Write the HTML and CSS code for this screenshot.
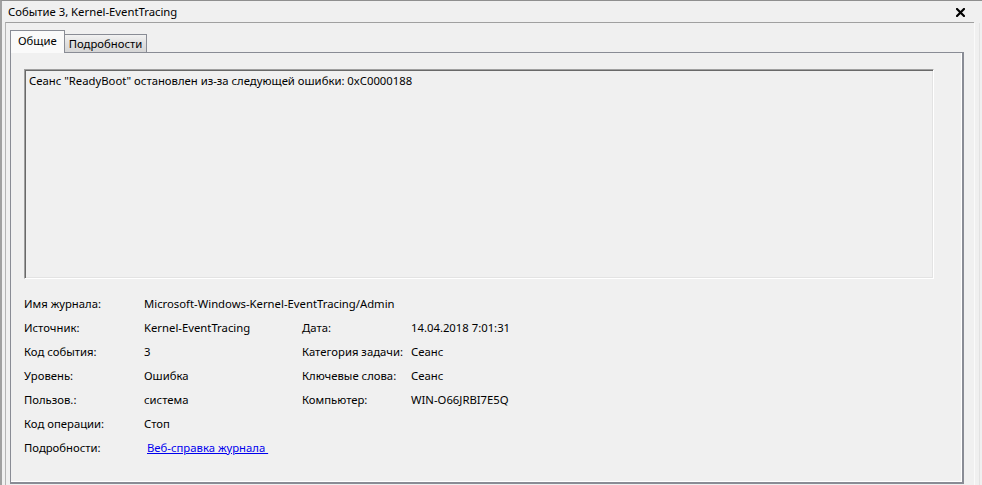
FILE: index.html
```html
<!DOCTYPE html>
<html>
<head>
  <meta charset="utf-8">
  <title>Событие 3, Kernel-EventTracing</title>
  <link rel="stylesheet" href="styles.css">
</head>
<body>
<div class="window">
  <div class="titlebar">
    <span class="title">Событие 3, Kernel-EventTracing</span>
    <svg class="close" width="9" height="9" viewBox="0 0 9 9">
      <path d="M1 1 L8 8 M8 1 L1 8" stroke="#000" stroke-width="2.2" stroke-linecap="square"/>
    </svg>
  </div>
  <div class="pane">
    <div class="tabs">
      <div class="tab active">Общие</div>
      <div class="tab">Подробности</div>
    </div>
    <div class="tabpanel">
      <div class="message">Сеанс "ReadyBoot" остановлен из-за следующей ошибки: 0xC0000188</div>
      <div class="props">
        <div class="lbl">Имя журнала:</div>
        <div class="val wide">Microsoft-Windows-Kernel-EventTracing/Admin</div>

        <div class="lbl">Источник:</div>
        <div class="val">Kernel-EventTracing</div>
        <div class="lbl">Дата:</div>
        <div class="val">14.04.2018 7:01:31</div>

        <div class="lbl">Код события:</div>
        <div class="val">3</div>
        <div class="lbl">Категория задачи:</div>
        <div class="val">Сеанс</div>

        <div class="lbl">Уровень:</div>
        <div class="val">Ошибка</div>
        <div class="lbl">Ключевые слова:</div>
        <div class="val">Сеанс</div>

        <div class="lbl">Пользов.:</div>
        <div class="val">система</div>
        <div class="lbl">Компьютер:</div>
        <div class="val">WIN-O66JRBI7E5Q</div>

        <div class="lbl">Код операции:</div>
        <div class="val wide">Стоп</div>

        <div class="lbl">Подробности:</div>
        <div class="val wide"><a href="#" class="help">Веб-справка журнала </a></div>
      </div>
    </div>
  </div>
</div>
</body>
</html>
```

FILE: styles.css
```css
html, body {
  margin: 0;
  padding: 0;
}

body {
  width: 982px;
  height: 485px;
  overflow: hidden;
  background: #f0f0f0;
  font-family: "Noto Sans", "Open Sans", sans-serif;
  font-size: 11.3px;
  color: #000;
}

.window {
  height: 485px;
  box-sizing: border-box;
  border-top: 1px solid #8f8f8f;
  border-left: 2px solid #a0a0a0;
  display: flex;
  flex-direction: column;
}

.titlebar {
  height: 21px;
  display: flex;
  align-items: center;
  padding: 0 17px 0 6px;
  justify-content: space-between;
}

.title {
  line-height: 16px;
}

.close {
  margin-top: 1px;
}

.pane {
  flex: 1;
  margin-left: 3px;
  border-top: 1px solid #a0a0a0;
  border-left: 1px solid #b4b4b4;
  margin-right: 8px;
  padding: 8px 0 0 4px;
  display: flex;
  flex-direction: column;
  position: relative;
}

.pane::after {
  content: "";
  position: absolute;
  top: 0;
  right: -6px;
  bottom: 0;
  width: 4px;
  border-left: 1px solid #fafafa;
  border-right: 1px solid #e2e2e2;
}

.tabs {
  display: flex;
  align-items: flex-end;
  height: 21px;
  position: relative;
  z-index: 1;
}

.tab {
  height: 17px;
  line-height: 17px;
  padding: 0 4px;
  border: 1px solid #898c95;
  border-bottom: none;
  background: linear-gradient(#f2f2f2, #e0e0e0 50%, #d6d6d6);
  margin-left: -1px;
}

.tab.active {
  line-height: 19px;
  padding: 0 7px;
  background: #fafafa;
  margin-left: 0;
  margin-bottom: -1px;
  height: 22px;
}

.tabpanel {
  flex: 1;
  width: 954px;
  box-sizing: border-box;
  border: 1px solid #898c95;
  border-right-width: 2px;
  border-bottom-width: 2px;
  box-shadow: inset -1px -1px 0 #fff;
  padding: 16px 0 0 13px;
  margin-bottom: 1px;
}

.message {
  width: 910px;
  height: 210px;
  box-sizing: border-box;
  border: 1px solid;
  border-color: #a0a0a0 #fff #fff #a0a0a0;
  box-shadow: inset 1px 1px 0 #696969, inset -1px -1px 0 #e3e3e3;
  padding: 3px 4px;
  line-height: 15px;
}

.props {
  margin-top: 12px;
  display: grid;
  grid-template-columns: 120px 158px 109px auto;
  grid-auto-rows: 24px;
  align-items: center;
}

.val.wide {
  grid-column: 2 / 5;
}

.help {
  color: #0000ee;
  margin-left: 3px;
  white-space: pre;
}
```
